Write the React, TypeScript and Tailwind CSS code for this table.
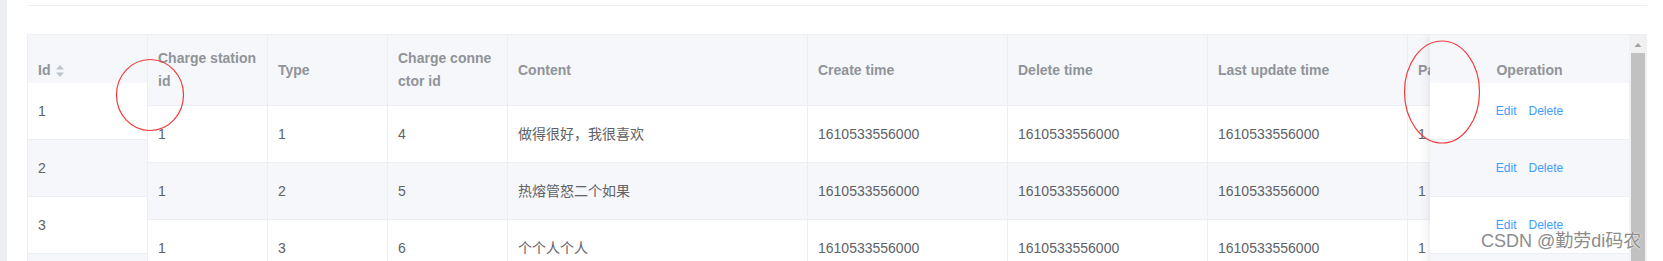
import React from 'react';

type Row = {
  id: number;
  station: number;
  type: number;
  connector: number;
  content: string;
  create: string;
  del: string;
  last: string;
  pa: number;
};

const rows: Row[] = [
  { id: 1, station: 1, type: 1, connector: 4, content: '做得很好，我很喜欢', create: '1610533556000', del: '1610533556000', last: '1610533556000', pa: 1 },
  { id: 2, station: 1, type: 2, connector: 5, content: '热熔管怒二个如果', create: '1610533556000', del: '1610533556000', last: '1610533556000', pa: 1 },
  { id: 3, station: 1, type: 3, connector: 6, content: '个个人个人', create: '1610533556000', del: '1610533556000', last: '1610533556000', pa: 1 },
  { id: 4, station: 1, type: 4, connector: 7, content: '', create: '1610533556000', del: '1610533556000', last: '1610533556000', pa: 1 },
];

const th = 'shrink-0 flex items-center px-[10px] border-r border-[#ebeef5] font-bold text-[#909399] leading-[23px]';
const td = 'shrink-0 flex items-center px-[10px] border-r border-[#ebeef5] text-[#606266]';

const SortCaret = () => (
  <svg width="10" height="14" viewBox="0 0 10 14" className="ml-[5px]">
    <path d="M1 5.5 L5 1 L9 5.5 Z" fill="#c0c4cc" />
    <path d="M1 8.5 L5 13 L9 8.5 Z" fill="#c0c4cc" />
  </svg>
);

const App = () => {
  return (
    <div className="relative flex h-[261px] w-[1663px] overflow-hidden bg-white text-[14px] font-['Liberation_Sans','Noto_Sans_CJK_SC',sans-serif]">
      {/* side strip */}
      <div className="w-[7px] shrink-0 bg-[#eceef1]" />

      <div className="flex min-w-0 flex-1 flex-col pl-[20px] pr-[16px] pt-[5px]">
        <div className="border-t border-[#ebeef5]" />

        {/* table */}
        <div className="mt-[28px] flex min-w-0 flex-1 border-l border-t border-[#ebeef5]">
          <div className="relative min-w-0 flex-1 overflow-hidden">
            {/* main table */}
            <div className="w-max">
              <div className="flex h-[71px] border-b border-[#ebeef5] bg-[#f5f7fa]">
                <div className={`${th} w-[120px]`}>Id</div>
                <div className={`${th} w-[120px]`}>
                  <div>
                    <div className="whitespace-nowrap">Charge station</div>
                    <div>id</div>
                  </div>
                </div>
                <div className={`${th} w-[120px]`}>Type</div>
                <div className={`${th} w-[120px]`}>
                  <div>
                    <div className="whitespace-nowrap">Charge conne</div>
                    <div>ctor id</div>
                  </div>
                </div>
                <div className={`${th} w-[300px]`}>Content</div>
                <div className={`${th} w-[200px]`}>Create time</div>
                <div className={`${th} w-[200px]`}>Delete time</div>
                <div className={`${th} w-[200px]`}>Last update time</div>
                <div className={`${th} w-[200px]`}>Parent id</div>
                <div className={`${th} w-[200px] justify-center`}>Operation</div>
              </div>
              {rows.map((r, i) => (
                <div
                  key={r.id}
                  className={`flex h-[57px] border-b border-[#ebeef5] ${i % 2 === 1 ? 'bg-[#f5f7fa]' : 'bg-white'}`}
                >
                  <div className={`${td} w-[120px]`}>{r.id}</div>
                  <div className={`${td} w-[120px]`}>{r.station}</div>
                  <div className={`${td} w-[120px]`}>{r.type}</div>
                  <div className={`${td} w-[120px]`}>{r.connector}</div>
                  <div className={`${td} w-[300px]`}>{r.content}</div>
                  <div className={`${td} w-[200px]`}>{r.create}</div>
                  <div className={`${td} w-[200px]`}>{r.del}</div>
                  <div className={`${td} w-[200px]`}>{r.last}</div>
                  <div className={`${td} w-[200px]`}>{r.pa}</div>
                  <div className={`${td} w-[200px]`} />
                </div>
              ))}
            </div>

            {/* fixed left column */}
            <div className="absolute left-0 top-0 w-[120px] border-r border-[#ebeef5] bg-white">
              <div className="flex h-[71px] items-center bg-[#f5f7fa] px-[10px] font-bold text-[#909399]">
                Id
                <SortCaret />
              </div>
              <div className="-mt-[23px]">
                {rows.map((r, i) => (
                  <div
                    key={r.id}
                    className={`flex h-[57px] items-center border-b border-[#ebeef5] px-[10px] text-[#606266] ${i % 2 === 1 ? 'bg-[#f5f7fa]' : 'bg-white'}`}
                  >
                    {r.id}
                  </div>
                ))}
              </div>
            </div>

            {/* fixed right column */}
            <div className="absolute right-0 top-0 w-[199px] bg-white shadow-[0_0_10px_rgba(0,0,0,0.12)]">
              <div className="flex h-[71px] items-center justify-center bg-[#f5f7fa] font-bold text-[#909399]">
                Operation
              </div>
              <div className="-mt-[23px]">
                {rows.map((r, i) => (
                  <div
                    key={r.id}
                    className={`flex h-[57px] items-center justify-center gap-[12px] border-b border-[#ebeef5] text-[12px] text-[#409eff] ${i % 2 === 1 ? 'bg-[#f5f7fa]' : 'bg-white'}`}
                  >
                    <span>Edit</span>
                    <span>Delete</span>
                  </div>
                ))}
              </div>
            </div>
          </div>

          {/* scrollbar */}
          <div className="flex w-[18px] shrink-0 flex-col bg-[#f1f1f1]">
            <div className="h-[18px]">
              <svg width="18" height="18" viewBox="0 0 18 18">
                <path d="M5.5 12 L9 8 L12.5 12 Z" fill="#a3a3a3" />
              </svg>
            </div>
            <div className="mx-[2px] flex-1 bg-[#c1c1c1]" />
          </div>
        </div>
      </div>

      {/* red annotations */}
      <svg className="pointer-events-none absolute left-0 top-0" width="1663" height="261">
        <ellipse cx="150" cy="95" rx="33.5" ry="35.5" fill="none" stroke="#f23a3a" strokeWidth="1.2" />
        <ellipse cx="1442" cy="92" rx="37.5" ry="51" fill="none" stroke="#f23a3a" strokeWidth="1.2" />
      </svg>

      {/* watermark */}
      <div className="pointer-events-none absolute left-[1481px] top-[230px] whitespace-nowrap text-[18px] leading-[22px] text-[#8c8c8c] [text-shadow:0_0_2px_#fff,0_0_1px_#fff]">
        CSDN @勤劳di码农
      </div>
    </div>
  );
};

export default App;
